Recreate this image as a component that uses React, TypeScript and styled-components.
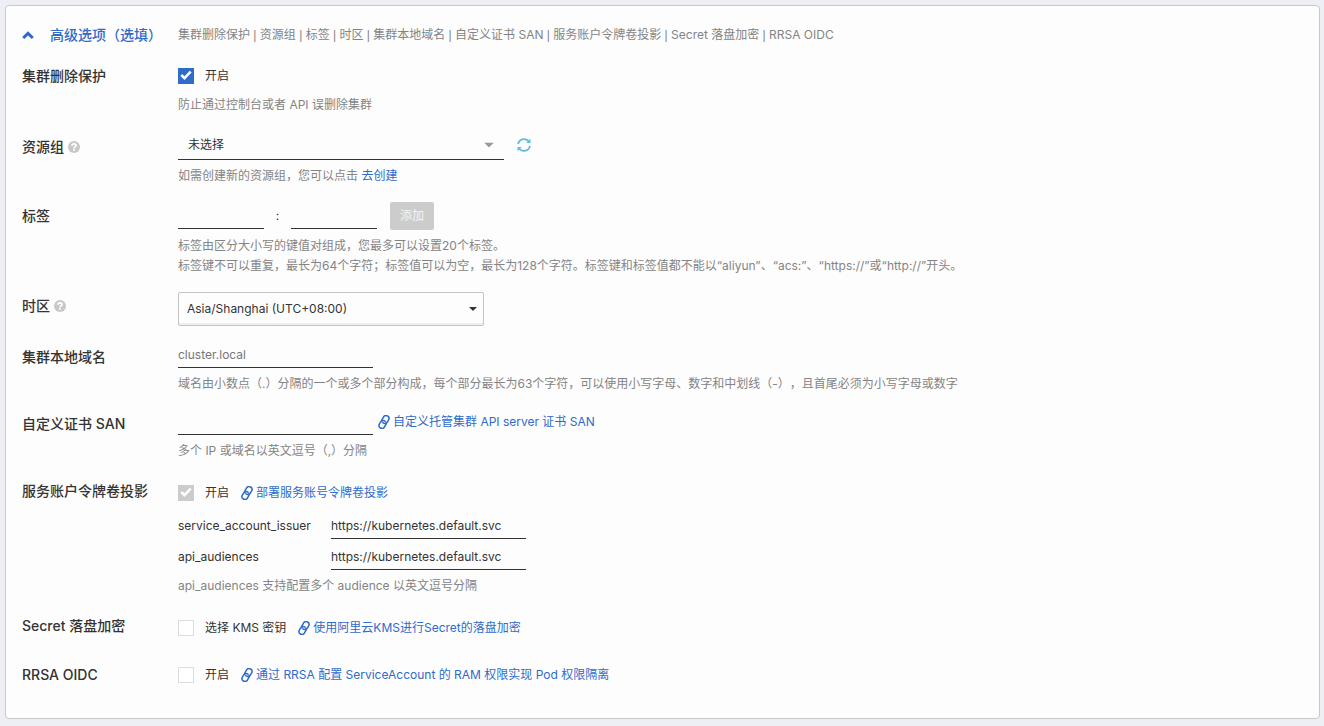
import React, { useState } from "react";
import styled, { createGlobalStyle, css } from "styled-components";

const GlobalStyle = createGlobalStyle`
  * { box-sizing: border-box; }
  body {
    margin: 0;
    background: #eeeff4;
    color: #333;
    font-family: Inter, "Noto Sans CJK SC", sans-serif;
    font-size: 12px;
    line-height: 20px;
    text-spacing-trim: space-all;
  }
  input, select, button { font: inherit; color: inherit; }
`;

const Page = styled.main`
  padding: 5px 4px 7px 5px;
`;

const Panel = styled.section`
  padding: 19px 16px 33px;
  border: 1px solid #c8c8cc;
  border-radius: 4px;
  background: #fdfdfd;
`;

const Row = styled.div<{ $gap?: number }>`
  display: grid;
  grid-template-columns: 156px minmax(0, 1fr);
  margin-top: ${({ $gap = 16 }) => $gap}px;
`;

const Header = styled.div`
  display: grid;
  grid-template-columns: 156px minmax(0, 1fr);
  align-items: center;
  height: 20px;
  margin-bottom: 21px;
`;

const Toggle = styled.button`
  display: flex;
  align-items: center;
  gap: 16px;
  padding: 0;
  border: 0;
  background: none;
  color: #2f6bc9;
  font-size: 14px;
  font-weight: 500;
  white-space: nowrap;
  cursor: pointer;
`;

const Muted = styled.p`
  margin: 0;
  color: #848484;
`;

const Separator = styled.span`
  font-family: "Liberation Sans", sans-serif;
`;

const Help = styled(Muted)<{ $gap?: number }>`
  margin-top: ${({ $gap = 6 }) => $gap}px;
`;

const Name = styled.div<{ $top?: number }>`
  display: flex;
  align-items: center;
  align-self: start;
  gap: 4px;
  padding-top: ${({ $top = 0 }) => $top}px;
  font-size: 14px;
  font-weight: 500;
`;

const Body = styled.div<{ $top?: number }>`
  padding-top: ${({ $top = 0 }) => $top}px;
`;

const Line = styled.div`
  display: flex;
  align-items: center;
`;

const underline = css`
  border: 0;
  border-bottom: 1px solid #333;
  border-radius: 0;
  background: transparent;
  outline: none;
`;

const TextInput = styled.input<{ $width?: number }>`
  ${underline}
  width: ${({ $width = 195 }) => $width}px;
  height: 26px;
  padding: 0;
  &::placeholder { color: #777; opacity: 1; }
`;

const TagLine = styled.div`
  display: flex;
  align-items: flex-start;
  height: 28px;
  input { height: 27px; }
`;

const Colon = styled.span`
  width: 27px;
  line-height: 28px;
  text-align: center;
`;

const AddButton = styled.button`
  width: 44px;
  height: 28px;
  margin-left: 13px;
  padding: 0;
  border: 0;
  border-radius: 2px;
  background: #ccc;
  color: #f4f4f4;
`;

const SelectBox = styled.div<{ $boxed?: boolean }>`
  position: relative;
  width: ${({ $boxed }) => ($boxed ? 306 : 326)}px;
  height: ${({ $boxed }) => ($boxed ? 34 : 30)}px;

  select {
    ${underline}
    display: block;
    appearance: none;
    width: 100%;
    height: 100%;
    padding: 0 30px 0 10px;
    ${({ $boxed }) =>
      $boxed &&
      css`
        padding-left: 8px;
        border: 1px solid #c4c4c4;
        border-radius: 2px;
        box-shadow: inset 0 -2px 1px #eee;
      `}
  }

  svg {
    position: absolute;
    top: 50%;
    right: ${({ $boxed }) => ($boxed ? 7 : 10)}px;
    transform: translateY(-50%);
    pointer-events: none;
  }
`;

const RefreshButton = styled.button`
  display: flex;
  margin-left: 13px;
  padding: 0;
  border: 0;
  background: none;
  cursor: pointer;
`;

const CheckLabel = styled.label`
  display: flex;
  align-items: center;
  gap: 11px;
`;

const CheckInput = styled.input`
  appearance: none;
  width: 16px;
  height: 16px;
  margin: 0;
  border: 1px solid #ddd;
  background: #fff;
  &:checked {
    border: 0;
    background: #2f6bc9
      url("data:image/svg+xml,%3Csvg xmlns='http://www.w3.org/2000/svg' viewBox='0 0 16 16'%3E%3Cpath d='M3.3 7l3.2 3.1 6.2-6.4' fill='none' stroke='white' stroke-width='2.6'/%3E%3C/svg%3E");
  }
  &:disabled { background-color: #ccc; }
`;

const Anchor = styled.a<{ $gap?: number }>`
  display: inline-flex;
  align-items: center;
  gap: 3px;
  margin-left: ${({ $gap = 0 }) => $gap}px;
  color: #2f6bc9;
  text-decoration: none;
`;

const Param = styled.div<{ $gap?: number }>`
  display: grid;
  grid-template-columns: 153px auto;
  justify-content: start;
  align-items: center;
  margin-top: ${({ $gap = 5 }) => $gap}px;
`;

const Chevron = () => (
  <svg width="12" height="8" viewBox="0 0 12 8" aria-hidden="true">
    <path d="M1.2 7L6 2.4 10.8 7" fill="none" stroke="currentColor" strokeWidth="3" />
  </svg>
);

const Caret = ({ width, height, color }: { width: number; height: number; color: string }) => (
  <svg width={width} height={height} viewBox="0 0 10 5" preserveAspectRatio="none" aria-hidden="true">
    <path d="M0 0h10L5 5z" fill={color} />
  </svg>
);

const HelpIcon = () => (
  <svg width="12" height="12" viewBox="0 0 12 12" aria-hidden="true">
    <circle cx="6" cy="6" r="6" fill="#c8c8c8" />
    <path d="M4 4.7c0-2.5 4-2.4 4-.1 0 1.4-2 1.2-2 2.6M6 8v1.8" fill="none" stroke="#fff" strokeWidth="1.8" />
  </svg>
);

const Refresh = () => (
  <svg width="14" height="14" viewBox="0 0 14 14" aria-hidden="true">
    <g fill="none" stroke="#62bbe0" strokeWidth="1.8">
      <path d="M1.1 6.2A6 6 0 0 1 11.6 3.2" />
      <path d="M12.9 7.8A6 6 0 0 1 2.4 10.8" />
    </g>
    <path d="M13.5.8v4.2H9.3zM.5 13.2V9h4.2z" fill="#62bbe0" />
  </svg>
);

const ChainIcon = () => (
  <svg width="12" height="14" viewBox="1.7 0 20.6 24" aria-hidden="true">
    <g transform="rotate(-14 12 12)" fill="none" stroke="currentColor" strokeWidth="2.6" strokeLinecap="round">
      <path d="M10 13a5 5 0 0 0 7.54.54l3-3a5 5 0 0 0-7.07-7.07l-4 4a5 5 0 0 0-.9 3" />
      <path d="M14 11a5 5 0 0 0-7.54-.54l-3 3a5 5 0 0 0 7.07 7.07l4-4a5 5 0 0 0 .9-3" />
    </g>
  </svg>
);

const DocLink = ({ children, gap }: { children: React.ReactNode; gap: number }) => (
  <Anchor href="#" $gap={gap}>
    <ChainIcon />
    {children}
  </Anchor>
);

const Check = ({ children, ...rest }: React.InputHTMLAttributes<HTMLInputElement>) => (
  <CheckLabel>
    <CheckInput type="checkbox" {...rest} />
    {children}
  </CheckLabel>
);

const sections = [
  "集群删除保护",
  "资源组",
  "标签",
  "时区",
  "集群本地域名",
  "自定义证书 SAN",
  "服务账户令牌卷投影",
  "Secret 落盘加密",
  "RRSA OIDC",
];

export default function App() {
  const [open, setOpen] = useState(true);
  return (
    <>
      <GlobalStyle />
      <Page>
        <Panel>
          <Header>
            <Toggle type="button" aria-expanded={open} onClick={() => setOpen(!open)}>
              <Chevron />
              高级选项（选填）
            </Toggle>
            <Muted>
              {sections.map((name, i) => (
                <React.Fragment key={name}>
                  {i > 0 && <Separator> | </Separator>}
                  {name}
                </React.Fragment>
              ))}
            </Muted>
          </Header>
          {open && (
            <>
              <Row $gap={0}>
                <Name>集群删除保护</Name>
                <Body>
                  <Line>
                    <Check defaultChecked>开启</Check>
                  </Line>
                  <Help $gap={9}>防止通过控制台或者 API 误删除集群</Help>
                </Body>
              </Row>

              <Row $gap={15}>
                <Name $top={7}>
                  <label htmlFor="group">资源组</label>
                  <HelpIcon />
                </Name>
                <Body>
                  <Line>
                    <SelectBox>
                      <select id="group">
                        <option>未选择</option>
                      </select>
                      <Caret width={10} height={5} color="#999" />
                    </SelectBox>
                    <RefreshButton type="button" aria-label="刷新">
                      <Refresh />
                    </RefreshButton>
                  </Line>
                  <Help>
                    如需创建新的资源组，您可以点击 <Anchor href="#">去创建</Anchor>
                  </Help>
                </Body>
              </Row>

              <Row>
                <Name $top={4}>
                  <label htmlFor="tag">标签</label>
                </Name>
                <Body>
                  <TagLine>
                    <TextInput id="tag" $width={86} />
                    <Colon>:</Colon>
                    <TextInput $width={86} aria-label="标签值" />
                    <AddButton type="button" disabled>
                      添加
                    </AddButton>
                  </TagLine>
                  <Help>
                    标签由区分大小写的键值对组成，您最多可以设置20个标签。
                    <br />
                    标签键不可以重复，最长为64个字符；标签值可以为空，最长为128个字符。标签键和标签值都不能以“aliyun”、“acs:”、“https://”或“http://”开头。
                  </Help>
                </Body>
              </Row>

              <Row>
                <Name $top={4}>
                  <label htmlFor="zone">时区</label>
                  <HelpIcon />
                </Name>
                <Body>
                  <SelectBox $boxed>
                    <select id="zone">
                      <option>Asia/Shanghai (UTC+08:00)</option>
                    </select>
                    <Caret width={8} height={4} color="#333" />
                  </SelectBox>
                </Body>
              </Row>

              <Row>
                <Name $top={5}>
                  <label htmlFor="domain">集群本地域名</label>
                </Name>
                <Body>
                  <Line>
                    <TextInput id="domain" placeholder="cluster.local" />
                  </Line>
                  <Help>
                    域名由小数点（.）分隔的一个或多个部分构成，每个部分最长为63个字符，可以使用小写字母、数字和中划线（-），且首尾必须为小写字母或数字
                  </Help>
                </Body>
              </Row>

              <Row $gap={15}>
                <Name $top={5}>
                  <label htmlFor="san">自定义证书 SAN</label>
                </Name>
                <Body>
                  <Line>
                    <TextInput id="san" />
                    <DocLink gap={5}>自定义托管集群 API server 证书 SAN</DocLink>
                  </Line>
                  <Help>多个 IP 或域名以英文逗号（,）分隔</Help>
                </Body>
              </Row>

              <Row $gap={20}>
                <Name>服务账户令牌卷投影</Name>
                <Body $top={2}>
                  <Line>
                    <Check defaultChecked disabled>开启</Check>
                    <DocLink gap={12}>部署服务账号令牌卷投影</DocLink>
                  </Line>
                  <Param $gap={10}>
                    <label htmlFor="issuer">service_account_issuer</label>
                    <TextInput id="issuer" defaultValue="https://kubernetes.default.svc" />
                  </Param>
                  <Param>
                    <label htmlFor="audiences">api_audiences</label>
                    <TextInput id="audiences" defaultValue="https://kubernetes.default.svc" />
                  </Param>
                  <Help>api_audiences 支持配置多个 audience 以英文逗号分隔</Help>
                </Body>
              </Row>

              <Row $gap={20}>
                <Name>Secret 落盘加密</Name>
                <Body $top={2}>
                  <Line>
                    <Check>选择 KMS 密钥</Check>
                    <DocLink gap={12}>使用阿里云KMS进行Secret的落盘加密</DocLink>
                  </Line>
                </Body>
              </Row>

              <Row $gap={27}>
                <Name>RRSA OIDC</Name>
                <Body>
                  <Line>
                    <Check>开启</Check>
                    <DocLink gap={12}>通过 RRSA 配置 ServiceAccount 的 RAM 权限实现 Pod 权限隔离</DocLink>
                  </Line>
                </Body>
              </Row>
            </>
          )}
        </Panel>
      </Page>
    </>
  );
}
